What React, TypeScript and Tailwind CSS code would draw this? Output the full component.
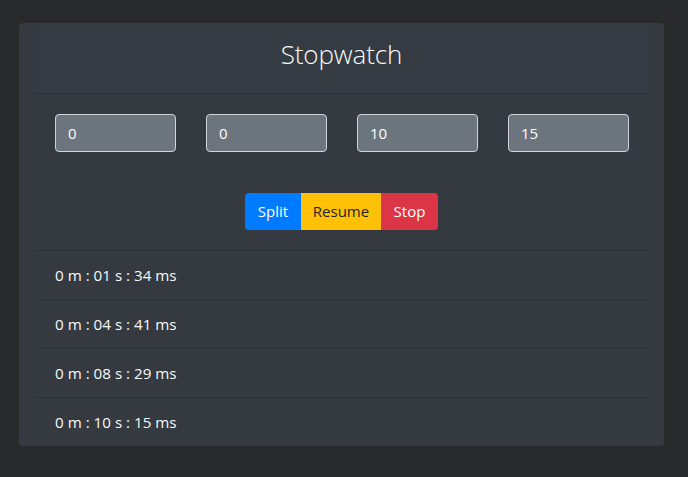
import React from 'react';

const splits = ['0 m : 01 s : 34 ms', '0 m : 04 s : 41 ms', '0 m : 08 s : 29 ms', '0 m : 10 s : 15 ms'];
const fields = ['0', '0', '10', '15'];

export default function App() {
  return (
    <div
      className="min-h-[477px] w-[688px] bg-[#292a2c] pt-[23px] pl-[19px]"
      style={{ fontFamily: '"Open Sans", "Noto Sans", sans-serif' }}
    >
      <div className="w-[645px] rounded-[4px] bg-[#343a40] px-4 text-[#f8f9fa]">
        {/* Header */}
        <div className="flex h-[71px] items-center justify-center border-b border-[#2c3136] bg-[#353b42] pb-[7px]">
          <h1 className="text-[26px] font-light tracking-[-0.1px]">Stopwatch</h1>
        </div>

        {/* Inputs */}
        <div className="flex gap-[30px] pl-5 pt-5">
          {fields.map((v, i) => (
            <input
              key={i}
              readOnly
              value={v}
              className="h-[38px] w-[121px] rounded-[4px] border border-[#ced4da] bg-[#6c757d] px-3 text-[15px] text-white outline-none"
            />
          ))}
        </div>

        {/* Buttons */}
        <div className="flex justify-center pt-[41px] pb-5">
          <div className="flex h-[37px] overflow-hidden rounded-[4px] text-[15px]">
            <button className="w-[56px] bg-[#007bff] text-white">Split</button>
            <button className="w-[80px] bg-[#ffc107] text-[#212529]">Resume</button>
            <button className="w-[57px] bg-[#dc3545] text-white">Stop</button>
          </div>
        </div>

        {/* Splits */}
        <div>
          {splits.map((s) => (
            <div key={s} className="flex h-[49px] items-center border-t border-[#2c3136] pl-5 text-[15.2px]">
              {s}
            </div>
          ))}
        </div>
      </div>
    </div>
  );
}
